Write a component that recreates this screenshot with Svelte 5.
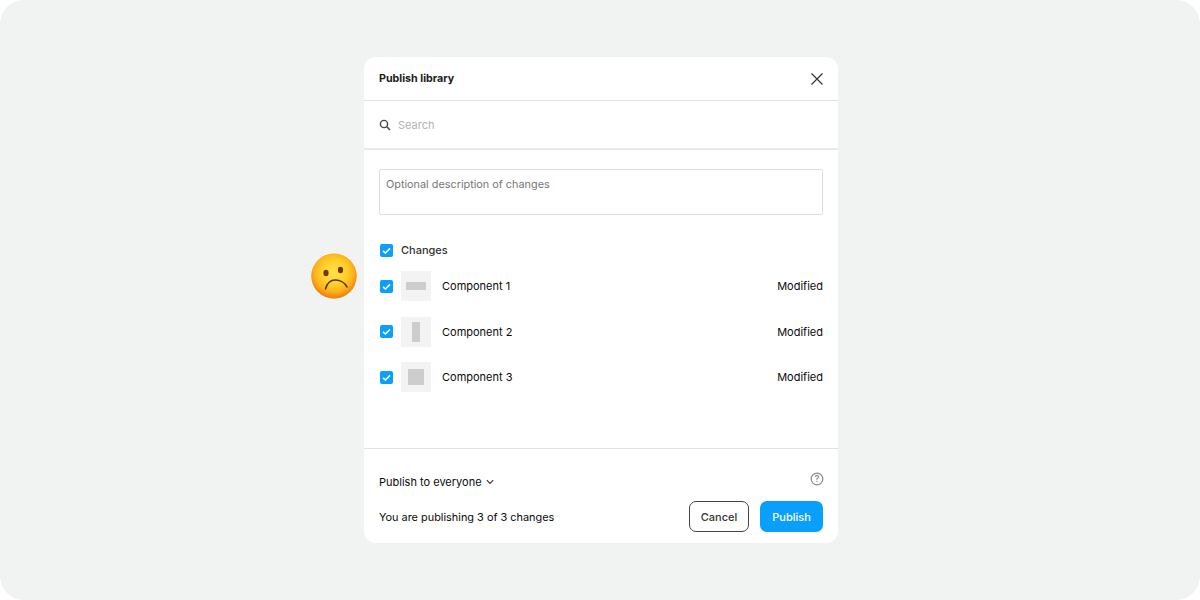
<script lang="ts">
	const components = [
		{ name: 'Component 1', w: 20, h: 8 },
		{ name: 'Component 2', w: 8, h: 20 },
		{ name: 'Component 3', w: 16, h: 16 }
	];
</script>

{#snippet check()}
	<span class="check">
		<svg width="13" height="13" viewBox="0 0 13 13" fill="none">
			<path d="M3 6.8 5.4 9 10 4.4" stroke="#fff" stroke-width="1.6" />
		</svg>
	</span>
{/snippet}

<div class="page">
	<section class="dialog">
		<!-- the emoji floats outside the dialog's left edge -->
		<svg class="emoji" width="48" height="48" viewBox="0 0 48 48">
			<defs>
				<radialGradient id="face" cx="50%" cy="42%" r="54%">
					<stop offset="0" stop-color="#ffe24a" />
					<stop offset="0.5" stop-color="#ffd02a" />
					<stop offset="0.8" stop-color="#fdb01c" />
					<stop offset="1" stop-color="#f08610" />
				</radialGradient>
			</defs>
			<circle cx="24" cy="24" r="23.500" fill="#fff" />
			<circle cx="24" cy="24" r="22.800" fill="url(#face)" />
			<ellipse cx="16" cy="21" rx="2.600" ry="3.200" fill="#6b3a10" />
			<ellipse cx="30.500" cy="18" rx="2.600" ry="3.200" fill="#6b3a10" />
			<path d="M15.500 37C17 31 21 28 25.500 28s9.500 2.500 11.500 7" fill="none" stroke="#5a3208" stroke-width="1.500" stroke-linecap="round" />
		</svg>

		<header class="head">
			<h2>Publish library</h2>
			<svg class="close" width="14" height="14" viewBox="0 0 14 14" fill="none">
				<path d="M1.500 1.500 12.500 12.500M12.500 1.500 1.500 12.500" stroke="#333" stroke-width="1.200" />
			</svg>
		</header>

		<div class="search">
			<svg width="12" height="12" viewBox="0 0 12 12" fill="none">
				<circle cx="5" cy="5" r="3.600" stroke="#444" stroke-width="1.400" />
				<path d="M7.800 7.800 11 11" stroke="#444" stroke-width="1.500" />
			</svg>
			<span>Search</span>
		</div>

		<div class="body">
			<div class="desc">Optional description of changes</div>
			<div class="all">
				{@render check()}
				<span>Changes</span>
			</div>
			<ul>
				{#each components as item}
					<li>
						{@render check()}
						<span class="thumb"><i style="width:{item.w}px;height:{item.h}px"></i></span>
						<span class="name">{item.name}</span>
						<span class="status">Modified</span>
					</li>
				{/each}
			</ul>
		</div>

		<footer class="foot">
			<div class="scope">
				<span>Publish to everyone</span>
				<svg width="8" height="6" viewBox="0 0 8 6" fill="none">
					<path d="M.8 1.200 4 4.400 7.200 1.200" stroke="#333" stroke-width="1.100" />
				</svg>
				<svg class="help" width="14" height="14" viewBox="0 0 14 14" fill="none">
					<circle cx="7" cy="7" r="5.800" stroke="#8a8a8a" stroke-width="1.200" />
					<text x="7" y="10" text-anchor="middle">?</text>
				</svg>
			</div>
			<div class="actions">
				<span class="summary">You are publishing 3 of 3 changes</span>
				<button class="cancel">Cancel</button>
				<button class="publish">Publish</button>
			</div>
		</footer>
	</section>
</div>

<style>
	:global(body) {
		background: #fff;
	}

	.page {
		box-sizing: border-box;
		width: 1200px;
		height: 600px;
		padding-left: 2px;
		display: flex;
		align-items: center;
		justify-content: center;
		background: #f1f3f2;
		border-radius: 24px;
		font-family: Inter, 'Liberation Sans', sans-serif;
		font-size: 11px;
		color: #0a0a0a;
	}

	.dialog {
		position: relative;
		width: 474px;
		height: 486px;
		display: flex;
		flex-direction: column;
		background: #fff;
		border-radius: 12px;
	}

	.emoji {
		position: absolute;
		left: -54.500px;
		top: 195px;
	}

	.head {
		box-sizing: border-box;
		height: 44px;
		padding: 0 15px;
		display: flex;
		align-items: center;
		justify-content: space-between;
		border-bottom: 1px solid #e2e2e2;
	}

	.close {
		margin-right: -1px;
	}

	h2 {
		margin: 0;
		font-size: 10.700px;
		font-weight: 700;
		color: #1c1c1c;
	}

	.search {
		box-sizing: border-box;
		height: 49px;
		padding: 0 15px;
		display: flex;
		align-items: center;
		gap: 7px;
		border-bottom: 2px solid #e9e9e9;
		color: #b3b3b3;
	}

	.body {
		flex: 1;
		padding: 19px 15px 0;
	}

	.desc {
		box-sizing: border-box;
		height: 46px;
		padding: 7px 6px;
		border: 1px solid #dedede;
		border-radius: 2px;
		color: #777;
		font-size: 10.850px;
		line-height: 15px;
	}

	.all {
		height: 24px;
		margin-top: 23px;
		display: flex;
		align-items: center;
		gap: 8px;
		font-weight: 500;
		color: #333;
	}

	.check {
		width: 13px;
		height: 13px;
		flex: none;
		display: block;
		background: #0a9ffb;
		border-radius: 2px;
		margin-left: 1px;
	}

	.check svg {
		display: block;
	}

	ul {
		margin: 9px 0 0;
		padding: 0;
		list-style: none;
		display: flex;
		flex-direction: column;
		gap: 15.500px;
	}

	li {
		height: 30px;
		display: flex;
		align-items: center;
	}

	.thumb {
		width: 30px;
		height: 30px;
		margin: 0 11px 0 8px;
		flex: none;
		display: flex;
		align-items: center;
		justify-content: center;
		background: #f3f3f3;
	}

	.thumb i {
		display: block;
		background: #cdcdcd;
	}

	.name {
		flex: 1;
	}

	.foot {
		box-sizing: border-box;
		height: 95px;
		padding: 24px 15px 0;
		border-top: 1px solid #e2e2e2;
	}

	.scope {
		height: 18px;
		display: flex;
		align-items: center;
		gap: 4px;
	}

	.help {
		margin: -6px -1px 0 auto;
	}

	.help text {
		font-size: 9px;
		font-weight: 600;
		fill: #8a8a8a;
	}

	.actions {
		margin-top: 10px;
		display: flex;
		align-items: center;
		gap: 11px;
	}

	.summary {
		flex: 1;
		font-size: 10.900px;
	}

	button {
		box-sizing: border-box;
		height: 31px;
		border-radius: 7px;
		font: 500 11px Inter, 'Liberation Sans', sans-serif;
		padding: 0;
	}

	.cancel {
		width: 60px;
		background: #fff;
		border: 1.500px solid #444;
		color: #333;
	}

	.publish {
		width: 63px;
		background: #0a9ffb;
		border: 0;
		color: #fff;
	}
</style>
